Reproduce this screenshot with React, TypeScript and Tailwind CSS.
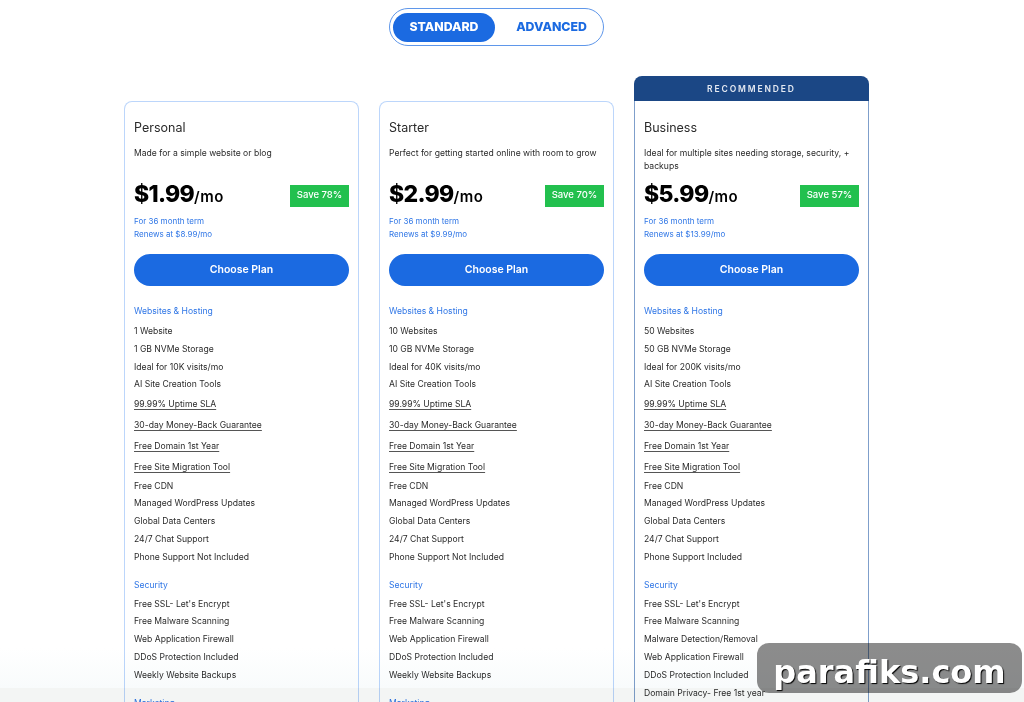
const plans = [
  {
    name: 'Personal',
    desc: 'Made for a simple website or blog',
    price: '$1.99',
    save: 'Save 78%',
    renews: '$8.99/mo',
    hosting: ['1 Website', '1 GB NVMe Storage', 'Ideal for 10K visits/mo'],
    phone: 'Phone Support Not Included',
    security: ["Free SSL- Let's Encrypt", 'Free Malware Scanning', 'Web Application Firewall', 'DDoS Protection Included', 'Weekly Website Backups'],
  },
  {
    name: 'Starter',
    desc: 'Perfect for getting started online with room to grow',
    price: '$2.99',
    save: 'Save 70%',
    renews: '$9.99/mo',
    hosting: ['10 Websites', '10 GB NVMe Storage', 'Ideal for 40K visits/mo'],
    phone: 'Phone Support Not Included',
    security: ["Free SSL- Let's Encrypt", 'Free Malware Scanning', 'Web Application Firewall', 'DDoS Protection Included', 'Weekly Website Backups'],
  },
  {
    name: 'Business',
    desc: 'Ideal for multiple sites needing storage, security, + backups',
    price: '$5.99',
    save: 'Save 57%',
    renews: '$13.99/mo',
    hosting: ['50 Websites', '50 GB NVMe Storage', 'Ideal for 200K visits/mo'],
    phone: 'Phone Support Included',
    security: ["Free SSL- Let's Encrypt", 'Free Malware Scanning', 'Malware Detection/Removal', 'Web Application Firewall', 'DDoS Protection Included', 'Domain Privacy- Free 1st year'],
    recommended: true,
  },
]

const linked = ['99.99% Uptime SLA', '30-day Money-Back Guarantee', 'Free Domain 1st Year', 'Free Site Migration Tool']
const extras = ['Free CDN', 'Managed WordPress Updates', 'Global Data Centers', '24/7 Chat Support']

function Row({ text }: { text: string }) {
  return <li className="h-[17.8px] leading-[17.8px]">{text}</li>
}

function LinkRow({ text }: { text: string }) {
  return (
    <li className="h-[20.85px] leading-[20.85px]">
      <span className="underline underline-offset-2 decoration-[#555]">{text}</span>
    </li>
  )
}

function PlanCard({ plan }: { plan: (typeof plans)[number] }) {
  return (
    <div className="w-[235px] flex flex-col">
      {plan.recommended ? (
        <div className="h-[25px] pt-px bg-[#1b4785] rounded-t-lg text-[#e4e9f2] text-[8.5px] font-semibold tracking-[0.22em] flex items-center justify-center">
          RECOMMENDED
        </div>
      ) : (
        <div className="h-[25px]" />
      )}
      <div
        className={
          plan.recommended
            ? 'border-x border-[#7f9fcb] pt-px px-[9px] pb-10 text-[#2a2a2a]'
            : 'border border-b-0 border-[#bcd6fb] rounded-t-lg px-[9px] pb-10 text-[#2a2a2a]'
        }
      >
        <h3 className="text-[12.5px] leading-4 mt-[18px]">{plan.name}</h3>
        <p className="text-[8.6px] leading-[13px] mt-[11px] h-[26px]">{plan.desc}</p>
        <div className="flex items-center justify-between mt-[6px]">
          <div className="text-black font-extrabold text-[23px] tracking-[-0.03em] leading-[30px]">
            {plan.price}
            <span className="text-[15px] font-semibold tracking-[0.03em]">/mo</span>
          </div>
          <div className="w-[59px] h-[22px] bg-[#22c04e] text-white text-[9.5px] font-medium flex items-center justify-center">
            {plan.save}
          </div>
        </div>
        <div className="text-[8px] leading-[12.5px] text-[#2f76e6] mt-[3px]">
          <div>For 36 month term</div>
          <div>Renews at {plan.renews}</div>
        </div>
        <button className="w-full h-[32px] mt-[14px] rounded-full bg-[#1b6ae1] text-white text-[10.5px] font-semibold">
          Choose Plan
        </button>
        <h4 className="text-[8.6px] leading-4 text-[#2f76e6] mt-[17px] mb-[4px]">Websites &amp; Hosting</h4>
        <ul className="text-[8.6px]">
          {plan.hosting.map(t => <Row key={t} text={t} />)}
          <Row text="AI Site Creation Tools" />
          {linked.map(t => <LinkRow key={t} text={t} />)}
          {extras.map(t => <Row key={t} text={t} />)}
          <Row text={plan.phone} />
        </ul>
        <h4 className="text-[8.6px] leading-4 text-[#2f76e6] mt-[10px] mb-[3px]">Security</h4>
        <ul className="text-[8.6px]">
          {plan.security.map(t => <Row key={t} text={t} />)}
        </ul>
        <h4 className="text-[8.6px] leading-4 text-[#2f76e6] mt-[10px]">Marketing</h4>
      </div>
    </div>
  )
}

export default function App() {
  return (
    <div className="relative h-[702px] overflow-hidden bg-white font-['Inter','Noto_Sans',sans-serif]">
      <div className="w-[993px]">
        <div className="flex justify-center pt-2">
          <div className="w-[215px] h-[38px] border border-[#5f97ea] rounded-full flex items-center pl-[3px] text-[12.3px] font-extrabold">
            <div className="w-[102px] h-[29px] rounded-full bg-[#1b6ae1] text-white flex items-center justify-center">
              STANDARD
            </div>
            <div className="flex-1 text-[#1b6ae1] text-center pl-[5px]">ADVANCED</div>
          </div>
        </div>

        <div className="flex justify-center gap-5 mt-[30px]">
          {plans.map(p => <PlanCard key={p.name} plan={p} />)}
        </div>
      </div>

      <div className="absolute inset-x-0 bottom-[14px] h-[40px] bg-gradient-to-b from-white to-[#f8fbfc] mix-blend-multiply pointer-events-none" />
      <div className="absolute inset-x-0 bottom-0 h-[14px] bg-[#f3f5f4] mix-blend-multiply pointer-events-none" />
      <div className="absolute left-[757px] top-[643px] w-[265px] h-[50px] pt-[8px] rounded-xl bg-black/45 flex items-center justify-center text-white text-[32px] font-bold font-['DejaVu_Sans',sans-serif] [text-shadow:1px_1px_1px_#000]">
        parafiks.com
      </div>
    </div>
  )
}
